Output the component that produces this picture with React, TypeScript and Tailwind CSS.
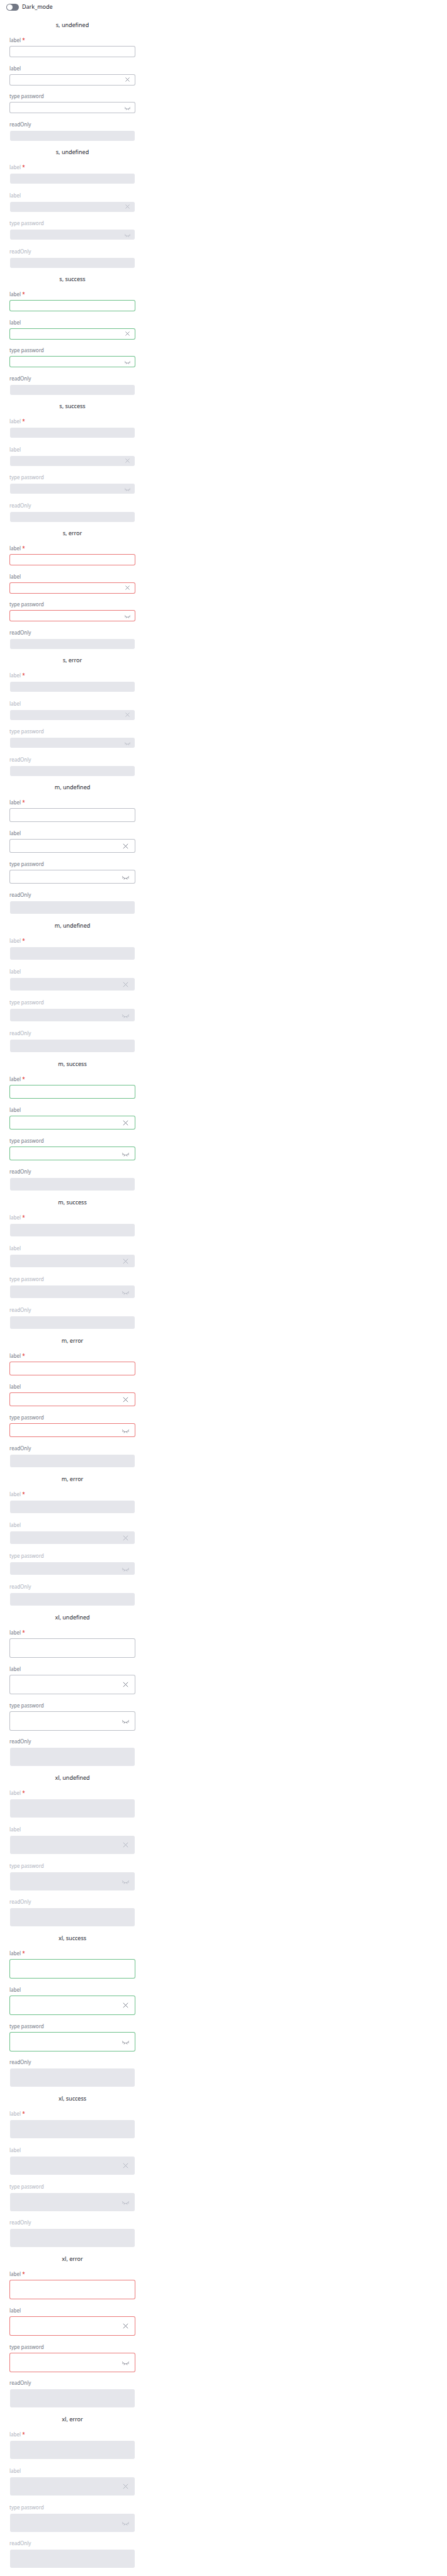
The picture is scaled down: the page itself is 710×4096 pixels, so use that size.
import { useState } from "react";

type Size = "s" | "m" | "xl";
type Status = "undefined" | "success" | "error";

const SIZES: Size[] = ["s", "m", "xl"];
const STATUSES: Status[] = ["undefined", "success", "error"];

const sectionHeight: Record<Size, string> = {
  s: "min-h-[202px]",
  m: "min-h-[220px]",
  xl: "min-h-[255px]",
};

const boxHeight: Record<Size, string> = {
  s: "h-[18px]",
  m: "h-[22px]",
  xl: "h-[31px]",
};

const boxPadding: Record<Size, string> = {
  s: "pl-2 pr-[7px]",
  m: "pl-2 pr-[9px]",
  xl: "pl-2 pr-[9px]",
};

const iconSize: Record<Size, string> = {
  s: "size-[9px]",
  m: "size-[11px]",
  xl: "size-[11px]",
};

const borderColor: Record<Status, string> = {
  undefined: "border-[#9a9eab]/65",
  success: "border-[#1ea04c]/65",
  error: "border-[#dd1f1f]/60",
};

function CrossIcon() {
  return (
    <svg viewBox="0 0 24 24" fill="none" stroke="currentColor" strokeWidth="2" strokeLinecap="round" className="size-full">
      <path d="M4.5 4.5 19.5 19.5M19.5 4.5 4.5 19.5" />
    </svg>
  );
}

function ClosedEyeIcon() {
  return (
    <svg viewBox="0 0 24 24" fill="none" stroke="currentColor" strokeWidth="1.7" strokeLinecap="round" strokeLinejoin="round" className="size-full overflow-visible">
      <path d="M1 9.8C3.5 14.2 7.4 16.8 12 16.8S20.5 14.2 23 9.8M3.8 13.4 0.8 15.8M20.2 13.4 23.2 15.8M8.2 16.4 6.8 20M15.8 16.4 17.2 20" />
    </svg>
  );
}

interface FieldProps {
  id: string;
  label: string;
  size: Size;
  status: Status;
  type?: string;
  required?: boolean;
  readOnly?: boolean;
  disabled?: boolean;
  icon?: "clear" | "reveal";
}

function Field({ id, label, size, status, type = "text", required, readOnly, disabled, icon }: FieldProps) {
  const filled = disabled || readOnly;
  const look = filled ? "border-white bg-[#e5e6eb] bg-clip-padding" : `bg-white ${borderColor[status]}`;
  return (
    <div className="flex flex-col">
      <label htmlFor={id} className={`h-4 text-[8px] leading-[14px] ${disabled ? "text-[#aeb2bd]" : "text-[#727784]"}`}>
        {label}
        {required && <span className="text-[#e02020]"> *</span>}
      </label>
      <div className={`flex items-center rounded-[3px] border ${boxHeight[size]} ${boxPadding[size]} ${look}`}>
        <input
          id={id}
          type={type}
          required={required}
          readOnly={readOnly}
          disabled={disabled}
          className="h-full min-w-0 flex-1 bg-transparent text-[8px] text-[#20222b] outline-none"
        />
        {icon && (
          <button
            type="button"
            disabled={disabled}
            aria-label={icon === "clear" ? "Clear" : "Show password"}
            className={`shrink-0 ${iconSize[size]} ${disabled ? "text-[#aeb2bd]" : "text-[#727784]"}`}
          >
            {icon === "clear" ? <CrossIcon /> : <ClosedEyeIcon />}
          </button>
        )}
      </div>
    </div>
  );
}

function FieldGroup({ size, status, disabled }: { size: Size; status: Status; disabled: boolean }) {
  const id = `${size}-${status}-${disabled ? "disabled" : "enabled"}`;
  const shared = { size, status, disabled };
  return (
    <section className={`flex flex-col ${sectionHeight[size]}`}>
      <h2 className="h-6 text-center text-[9px] leading-[14px] text-[#20222b]">
        {size}, {status}
      </h2>
      <div className="grid flex-1 grid-rows-4">
        <Field {...shared} id={`${id}-required`} label="label" required />
        <Field {...shared} id={`${id}-clear`} label="label" icon="clear" />
        <Field {...shared} id={`${id}-password`} label="type password" type="password" icon="reveal" />
        <Field {...shared} id={`${id}-readonly`} label="readOnly" readOnly />
      </div>
    </section>
  );
}

export default function App() {
  const [dark, setDark] = useState(false);
  return (
    <main className="min-h-screen bg-white font-['Noto_Sans',sans-serif]">
      <header className="flex h-[33px] items-start px-[10px] pt-[5px]">
        <label className="flex items-center gap-[5px] text-[9px] leading-3 text-[#20222b]">
          <input
            type="checkbox"
            role="switch"
            checked={dark}
            onChange={(event) => setDark(event.target.checked)}
            className="flex h-[11px] w-5 appearance-none items-center rounded-full bg-[#727784] px-px before:size-[9px] before:rounded-full before:bg-white checked:justify-end"
          />
          Dark_mode
        </label>
      </header>
      <div className="ml-[15px] max-w-[200px]">
        {SIZES.map((size) =>
          STATUSES.map((status) =>
            [false, true].map((disabled) => (
              <FieldGroup key={`${size}-${status}-${disabled}`} size={size} status={status} disabled={disabled} />
            )),
          ),
        )}
      </div>
    </main>
  );
}
